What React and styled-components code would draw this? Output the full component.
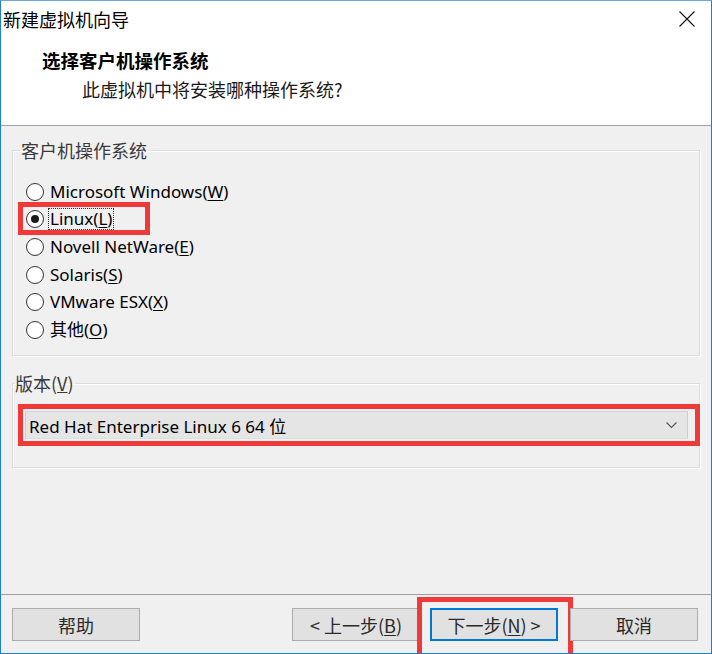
import React from "react";
import styled, { createGlobalStyle } from "styled-components";

const GlobalStyle = createGlobalStyle`
  html, body {
    margin: 0;
    padding: 0;
    background: #ffffff;
    overflow: hidden;
  }
  body {
    font-family: "Noto Sans", "Noto Sans CJK SC", sans-serif;
    color: #000000;
  }
`;

const Window = styled.div`
  position: relative;
  width: 712px;
  height: 654px;
  box-sizing: border-box;
  border: 1px solid #1e7fd0;
  border-top-color: #6aa9dd;
  background: #f0f0f0;
  overflow: hidden;
  display: grid;
  grid-template-rows: 36px 89px 468px 59px;
`;

const TitleBar = styled.div`
  background: #ffffff;
  display: flex;
  align-items: center;
  justify-content: space-between;
  padding-left: 2px;
  font-family: "Noto Sans CJK SC", sans-serif;
  font-size: 18px;
`;

const CloseButton = styled.div`
  width: 46px;
  height: 36px;
  display: flex;
  align-items: center;
  justify-content: center;
  margin-right: 2px;
`;

const Header = styled.div`
  box-sizing: border-box;
  background: #ffffff;
  border-bottom: 1px solid #a0a0a0;
  padding-left: 41px;
  display: flex;
  flex-direction: column;
`;

const Heading = styled.div`
  font-family: "Noto Sans CJK SC", sans-serif;
  font-weight: 700;
  font-size: 18.5px;
  line-height: 24px;
  margin-top: 11px;
`;

const SubHeading = styled.div`
  font-family: "Noto Sans CJK SC", sans-serif;
  font-size: 18px;
  line-height: 24px;
  margin-top: 5px;
  padding-left: 40px;
  color: #1a1a1a;
`;

const Body = styled.div`
  box-sizing: border-box;
  padding: 14px 12px 0 11px;
  display: flex;
  flex-direction: column;
`;

const Group = styled.fieldset`
  margin: ${(p) => p.$mt || 0}px 0 0 0;
  padding: 0;
  min-width: 0;
  height: ${(p) => p.$h}px;
  box-sizing: border-box;
  border: 1px solid #dcdcdc;
  box-shadow: inset 1px 1px 0 #ffffff, 1px 1px 0 #ffffff;
`;

const Legend = styled.legend`
  margin-left: ${(p) => p.$ml}px;
  padding: 0 1px;
  font-family: "Noto Sans CJK SC", "Noto Sans", sans-serif;
  font-size: 18px;
  line-height: 20px;
  color: #3a3a3a;

  u {
    text-decoration-thickness: 1px;
  }
`;

const RadioList = styled.div`
  padding: 18px 0 0 13px;
  display: flex;
  flex-direction: column;
`;

const RadioRow = styled.div`
  position: relative;
  height: 27.6px;
  display: flex;
  align-items: center;
  gap: 4px;
`;

const RadioCircle = styled.span`
  width: 18px;
  height: 18px;
  box-sizing: border-box;
  border-radius: 50%;
  border: 1px solid #333333;
  background: #ffffff;
  display: flex;
  align-items: center;
  justify-content: center;

  &::after {
    content: "";
    width: 8px;
    height: 8px;
    border-radius: 50%;
    background: ${(p) => (p.$checked ? "#1a1a1a" : "transparent")};
  }
`;

const RadioLabel = styled.span`
  font-family: "Noto Sans", "Noto Sans CJK SC", sans-serif;
  font-size: 17px;
  line-height: 20px;
  padding: 0 1px;
  border: 1px dotted ${(p) => (p.$focus ? "#333333" : "transparent")};

  u {
    text-decoration-thickness: 1px;
    text-underline-offset: 2px;
  }
`;

const Highlight = styled.div`
  position: absolute;
  left: ${(p) => p.$l}px;
  top: ${(p) => p.$t}px;
  width: ${(p) => p.$w}px;
  height: ${(p) => p.$h}px;
  box-sizing: border-box;
  border: 5px solid #f03a3a;
  pointer-events: none;
`;

const SelectWrap = styled.div`
  position: relative;
  margin: 18px 11px 0 12px;
`;

const Select = styled.div`
  height: 28px;
  box-sizing: border-box;
  background: #e5e5e5;
  border: 1px solid #cfcfcf;
  border-bottom-color: #cfe3e1;
  display: flex;
  align-items: center;
  justify-content: space-between;
  padding: 0 10px 0 3px;
  font-family: "Noto Sans", "Noto Sans CJK SC", sans-serif;
  font-size: 17px;
`;

const Footer = styled.div`
  box-sizing: border-box;
  border-top: 1px solid #a0a0a0;
  display: flex;
  align-items: flex-start;
  padding: 13px 14px 0 11px;
`;

const Button = styled.div`
  position: relative;
  width: 128px;
  height: 33px;
  box-sizing: border-box;
  margin-left: ${(p) => p.$ml || 0}px;
  background: #e1e1e1;
  border: ${(p) => (p.$default ? "2px solid #0078d7" : "1px solid #adadad")};
  display: flex;
  align-items: center;
  justify-content: center;
  font-family: "Noto Sans CJK SC", "Noto Sans", sans-serif;
  font-size: 18px;
  color: #2a2a2a;

  u {
    text-decoration-thickness: 1px;
    text-underline-offset: 2px;
  }
`;

const options = [
  { label: "Microsoft Windows", key: "W" },
  { label: "Linux", key: "L", checked: true },
  { label: "Novell NetWare", key: "E" },
  { label: "Solaris", key: "S" },
  { label: "VMware ESX", key: "X" },
  { label: "其他", key: "O" },
];

const App = () => {
  return (
    <>
      <GlobalStyle />
      <Window>
        <TitleBar>
          <span>新建虚拟机向导</span>
          <CloseButton>
            <svg width="16" height="16" viewBox="0 0 16 16">
              <path d="M0.5 0.5 L15.5 15.5 M15.5 0.5 L0.5 15.5" stroke="#111" strokeWidth="1.1" />
            </svg>
          </CloseButton>
        </TitleBar>
        <Header>
          <Heading>选择客户机操作系统</Heading>
          <SubHeading>此虚拟机中将安装哪种操作系统?</SubHeading>
        </Header>
        <Body>
          <Group $h={216}>
            <Legend $ml={7}>客户机操作系统</Legend>
            <RadioList>
              {options.map((o) => (
                <RadioRow key={o.key}>
                  <RadioCircle $checked={o.checked} />
                  <RadioLabel $focus={o.checked}>
                    {o.label}(<u>{o.key}</u>)
                  </RadioLabel>
                  {o.checked && <Highlight $l={-8} $t={-4} $w={132} $h={33} />}
                </RadioRow>
              ))}
            </RadioList>
          </Group>
          <Group $mt={17} $h={95}>
            <Legend $ml={1}>
              版本(<u>V</u>)
            </Legend>
            <SelectWrap>
              <Select>
                <span>Red Hat Enterprise Linux 6 64 位</span>
                <svg width="11" height="7" viewBox="0 0 11 7">
                  <path d="M0.5 0.5 L5.5 5.5 L10.5 0.5" fill="none" stroke="#555" strokeWidth="1.1" />
                </svg>
              </Select>
              <Highlight $l={-7} $t={-7} $w={682} $h={42} />
            </SelectWrap>
          </Group>
        </Body>
        <Footer>
          <Button>帮助</Button>
          <Button $ml={152}>
            &lt; 上一步(<u>B</u>)
          </Button>
          <Button $ml={10} $default>
            下一步(<u>N</u>) &gt;
            <Highlight $l={-15} $t={-13} $w={156} $h={62} />
          </Button>
          <Button $ml={12}>取消</Button>
        </Footer>
      </Window>
    </>
  );
};

export default App;
